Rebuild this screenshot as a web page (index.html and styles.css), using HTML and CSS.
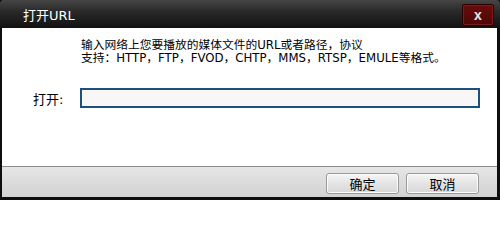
FILE: index.html
```html
<!DOCTYPE html>
<html>
<head>
<meta charset="utf-8">
<link rel="stylesheet" href="styles.css">
</head>
<body>
<div class="window">
  <div class="titlebar">
    <span class="title">打开URL</span>
    <div class="close">x</div>
  </div>
  <div class="content">
    <div class="message">
      <div class="line">输入网络上您要播放的媒体文件的URL或者路径，协议</div>
      <div class="line">支持：HTTP，FTP，FVOD，CHTP，MMS，RTSP，EMULE等格式。</div>
    </div>
    <div class="row">
      <span class="label">打开:</span>
      <div class="input"></div>
    </div>
  </div>
  <div class="footer">
    <div class="btn">确定</div>
    <div class="btn">取消</div>
  </div>
</div>
</body>
</html>
```
FILE: styles.css
```css
html, body {
  margin: 0;
  padding: 0;
}
body {
  font-family: "DejaVu Sans", "Noto Sans CJK SC", sans-serif;
  font-size: 12px;
}
.window {
  width: 500px;
  height: 200px;
  background: #0e0e0e;
  display: flex;
  flex-direction: column;
}
.titlebar {
  height: 28px;
  flex: none;
  display: flex;
  align-items: center;
  justify-content: space-between;
  padding: 0 6px 0 23px;
  background: linear-gradient(#464646, #2a2a2a 40%, #111111);
  border-radius: 4px 4px 0 0;
}
.title {
  color: #ffffff;
  font-size: 13px;
}
.close {
  width: 30px;
  height: 20px;
  margin-top: 2px;
  background: linear-gradient(#6a0c0c, #4e0606);
  border: 1px solid #2a0000;
  box-shadow: inset 0 0 0 1px #7a1d1d;
  border-radius: 2px;
  color: #e8e8e8;
  font-weight: bold;
  font-size: 14px;
  font-family: "Liberation Sans", sans-serif;
  display: flex;
  align-items: center;
  justify-content: center;
  line-height: 1;
}
.content {
  flex: 1;
  margin: 0 3px 0 2px;
  background: #ffffff;
  display: flex;
  flex-direction: column;
}
.message {
  padding: 10px 0 0 79px;
  color: #000;
}
.line {
  font-size: 11.75px;
  line-height: 12px;
  white-space: nowrap;
  overflow: hidden;
  height: 12px;
  padding-top: 1px;
}
.row {
  display: flex;
  align-items: center;
  margin-top: 24px;
  padding-left: 31px;
}
.label {
  width: 47px;
  font-size: 13px;
  color: #000;
}
.input {
  width: 396px;
  height: 16px;
  border: 2px solid #1f4f7e;
  background: #f8f7f6;
}
.footer {
  height: 31px;
  flex: none;
  margin: 0 3px 3px 2px;
  border-top: 1px solid #8c8c8c;
  background: linear-gradient(#e6e6e6, #d2d2d2);
  display: flex;
  justify-content: flex-end;
  align-items: flex-start;
  gap: 7px;
  padding: 6px 18px 0 0;
  box-sizing: border-box;
}
.btn {
  width: 71px;
  height: 19px;
  border: 1px solid #9a9a9a;
  border-radius: 3px;
  background: linear-gradient(#f6f6f6, #e4e4e4 50%, #d8d8d8);
  box-shadow: inset 0 0 0 1px #fbfbfb;
  display: flex;
  align-items: center;
  justify-content: center;
  font-size: 13px;
  color: #000;
}
```
